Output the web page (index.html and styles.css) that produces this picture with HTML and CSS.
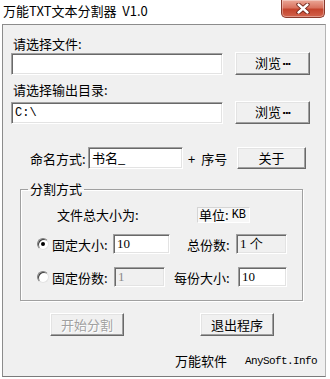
FILE: index.html
```html
<!DOCTYPE html>
<html lang="zh">
<head>
<meta charset="utf-8">
<title>万能TXT文本分割器 V1.0</title>
<link rel="stylesheet" href="styles.css">
</head>
<body>
<div class="titlebar">
  <span class="title">万能TXT文本分割器&nbsp; V1.0</span>
  <span class="close"><svg width="14" height="11" viewBox="0 0 14 11"><path d="M2.5 1.5 L11.5 9.5 M11.5 1.5 L2.5 9.5" stroke="#6b1f14" stroke-width="4.2" stroke-linecap="round"/><path d="M2.5 1.5 L11.5 9.5 M11.5 1.5 L2.5 9.5" stroke="#fff" stroke-width="2.4" stroke-linecap="round"/></svg></span>
</div>
<div class="window">
  <div class="label l1">请选择文件:</div>
  <div class="row r1"><div class="field wide"></div><button class="btn browse">浏览<span class="dots">···</span></button></div>
  <div class="label l2">请选择输出目录:</div>
  <div class="row r2"><div class="field wide mono">C:\</div><button class="btn browse">浏览<span class="dots">···</span></button></div>
  <div class="row naming">
    <span class="nlabel">命名方式:</span>
    <div class="field name">书名_</div>
    <span class="plus"><span class="plussign">+</span>序号</span>
    <button class="btn about">关于</button>
  </div>
  <fieldset class="group">
    <legend>分割方式</legend>
    <div class="grow g1"><span class="total">文件总大小为:</span><span class="unit">单位: <span class="mono">KB</span></span></div>
    <div class="grow g2">
      <span class="radio checked"></span>
      <span class="glabel w61">固定大小:</span>
      <div class="field small w57 num">10</div>
      <span class="glabel w49 ml17">总份数:</span>
      <div class="field small w51 ro num">1 个</div>
    </div>
    <div class="grow g3">
      <span class="radio"></span>
      <span class="glabel w62">固定份数:</span>
      <div class="field small w51 dis num">1</div>
      <span class="glabel w64 ml9">每份大小:</span>
      <div class="field small w49 num">10</div>
    </div>
  </fieldset>
  <div class="actions">
    <button class="btn act start" disabled>开始分割</button>
    <button class="btn act quit">退出程序</button>
  </div>
  <div class="footer"><span class="brand">万能软件</span><span class="site">AnySoft.Info</span></div>
</div>
</body>
</html>
```
FILE: styles.css
```css
* { box-sizing: border-box; }
html, body { margin: 0; padding: 0; }
body {
  width: 330px;
  height: 379px;
  background: #ffffff;
  font-family: "Noto Sans CJK SC", "Noto Sans", sans-serif;
  font-size: 13px;
  color: #000;
  overflow: hidden;
}
.titlebar {
  height: 24px;
  display: flex;
  justify-content: space-between;
  align-items: flex-start;
}
.title {
  margin: 3px 0 0 3px;
  font-size: 13px;
  line-height: 16px;
  color: #000;
}
.close {
  width: 44px;
  height: 18px;
  margin-right: 5px;
  border: 1px solid #8a3a2c;
  border-top: none;
  border-radius: 0 0 5px 5px;
  background: linear-gradient(#eba797, #d9735f 45%, #c4442d 55%, #d2634c);
  box-shadow: inset 0 0 0 1px rgba(255,255,255,0.35);
  display: flex;
  align-items: center;
  justify-content: center;
}
.window {
  margin: 0 4px 0 2px;
  height: 353px;
  background: #f0f0f0;
  border: 1px solid #8c8c8c;
  border-right-color: #b5b5b5;
  border-bottom-color: #7a7a7a;
}
.label { line-height: 16px; padding-left: 10px; }
.l1 { margin-top: 11px; }
.l2 { margin-top: 7px; }
.row { display: flex; align-items: center; }
.r1 { margin-top: 0; padding-left: 8px; }
.r2 { margin-top: 3px; padding-left: 8px; }
.field {
  background: #fff;
  border: 1px solid;
  border-color: #a0a0a0 #ffffff #ffffff #a0a0a0;
  box-shadow: inset 1px 1px 0 #696969, inset -1px -1px 0 #e3e3e3;
  height: 22px;
  padding: 0 3px;
  line-height: 20px;
  white-space: nowrap;
}
.wide { width: 212px; }
.mono { font-family: "Liberation Mono", monospace; font-size: 12px; }
.btn {
  font-family: "Noto Sans CJK SC", "Noto Sans", sans-serif;
  font-size: 13px;
  color: #000;
  background: #f0f0f0;
  border: 1px solid;
  border-color: #ffffff #696969 #696969 #ffffff;
  box-shadow: inset -1px -1px 0 #a0a0a0, inset 1px 1px 0 #e3e3e3;
  padding: 0;
  height: 23px;
  line-height: 20px;
}
.dots {
  font-family: "DejaVu Sans", sans-serif;
  font-weight: bold;
  font-size: 11px;
  letter-spacing: -1.5px;
  margin-left: 1px;
}
.browse { width: 75px; margin-left: 12px; }
.naming { margin-top: 23px; padding-left: 27px; }
.nlabel { width: 58px; }
.name { width: 95px; }
.plus { margin-left: 5px; width: 49px; }
.plussign { margin-right: 6px; }
.about { width: 69px; height: 22px; }
.group {
  margin: 12px 0 0 17px;
  width: 283px;
  padding: 0 0 13px 0;
  border: 1px solid #a0a0a0;
  box-shadow: inset 1px 1px 0 #fff, 1px 1px 0 #fff;
}
.group legend {
  margin-left: 7px;
  padding: 0 2px;
  line-height: 16px;
}
.grow { display: flex; align-items: center; }
.g1 { margin-top: 10px; line-height: 16px; }
.total { margin-left: 36px; width: 140px; }
.unit {
  display: inline-flex;
  align-items: center;
  width: 53px;
  height: 16px;
  padding-left: 1px;
  background: #f7f7f7;
  border: 1px solid;
  border-color: #d5d5d5 #ffffff #ffffff #d5d5d5;
}
.unit .mono { margin-left: 3px; }
.g2 { margin-top: 11px; }
.g3 { margin-top: 13px; }
.radio {
  position: relative;
  margin-left: 16px;
  width: 12px;
  height: 12px;
  border-radius: 50%;
  background: #fff;
  border: 1px solid;
  border-color: #808080 #e3e3e3 #e3e3e3 #808080;
  box-shadow: inset 1px 1px 0 #404040;
}
.radio.checked::after {
  content: "";
  position: absolute;
  left: 3px;
  top: 3px;
  width: 4px;
  height: 4px;
  border-radius: 50%;
  background: #000;
}
.glabel { margin-left: 3px; }
.w61 { width: 61px; }
.w62 { width: 62px; }
.w64 { width: 64px; }
.w49 { width: 49px; }
.w51 { width: 51px; }
.w57 { width: 57px; }
.ml17 { margin-left: 17px; }
.ml9 { margin-left: 9px; }
.small { height: 20px; line-height: 18px; }
.num { font-family: "Liberation Serif", serif; font-size: 13px; padding-left: 3px; }
.ro { background: #f0f0f0; }
.dis { background: #f0f0f0; color: #8a8a8a; }
.actions { display: flex; margin-top: 12px; padding-left: 47px; }
.act { width: 74px; }
.quit { margin-left: 76px; }
.start { color: #a0a0a0; text-shadow: 1px 1px 0 #fff; }
.footer {
  display: flex;
  justify-content: flex-end;
  align-items: center;
  margin-top: 17px;
  padding-right: 8px;
  line-height: 16px;
}
.site {
  margin-left: 18px;
  font-family: "Liberation Mono", monospace;
  font-size: 11px;
  letter-spacing: -0.6px;
}
```
